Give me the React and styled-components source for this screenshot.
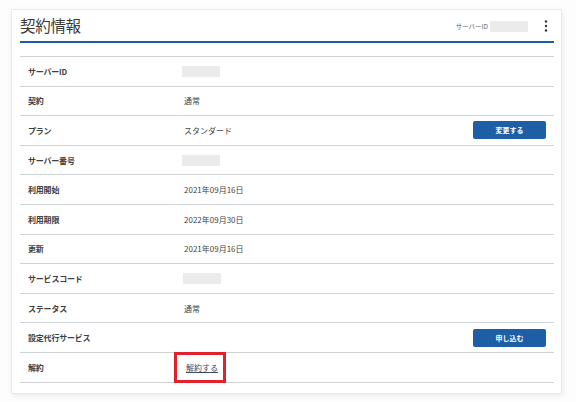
import React from "react";
import styled, { createGlobalStyle } from "styled-components";

const Global = createGlobalStyle`
  html, body { margin: 0; padding: 0; background: #ffffff; }
  body { font-family: "Noto Sans CJK JP", "Noto Sans", sans-serif; color: #333; }
  * { box-sizing: border-box; }
`;

const Page = styled.div`
  width: 576px;
  height: 402px;
  padding: 9px 14px 8px 11px;
  background: #fdfdfd;
`;

const Card = styled.section`
  width: 551px;
  height: 385px;
  background: #fff;
  border: 1px solid #e9e9e9;
  box-shadow: 1px 2px 6px rgba(0, 0, 0, 0.07);
  padding: 0 7px 0 8px;
  display: flex;
  flex-direction: column;
`;

const Header = styled.header`
  height: 33px;
  display: flex;
  align-items: center;
  justify-content: space-between;
  border-bottom: 2px solid #1f5c9f;
  padding-top: 1px;
`;

const Title = styled.h1`
  margin: 0;
  font-size: 15.5px;
  font-weight: 400;
  color: #3a3a3a;
  letter-spacing: -0.3px;
  line-height: 1;
`;

const HeaderMeta = styled.div`
  display: flex;
  align-items: center;
  gap: 2px;
  font-size: 6.5px;
  color: #666;
  padding-right: 6px;
`;

const Placeholder = styled.span`
  display: inline-block;
  width: ${(p) => p.$w || 38}px;
  height: ${(p) => p.$h || 11}px;
  background: #ebebeb;
`;

const Kebab = styled.svg`
  margin-left: 14px;
  display: block;
`;

const Table = styled.div`
  margin-top: 13px;
  border-top: 1px solid #cfd2d6;
  display: flex;
  flex-direction: column;
`;

const Row = styled.div`
  height: 29.6px;
  display: grid;
  grid-template-columns: 154px 1fr auto;
  align-items: center;
  border-bottom: 1px solid #cfd2d6;
  padding: 0 8px 0 8px;
`;

const Label = styled.div`
  font-size: 8px;
  font-weight: 700;
  color: #404040;
  letter-spacing: -0.2px;
`;

const Value = styled.div`
  font-size: 8px;
  color: #444;
  position: relative;
  height: 100%;
  display: flex;
  align-items: center;
  padding-left: ${(p) => (p.$pad ? 2 : 0)}px;
`;

const Button = styled.button`
  width: 73px;
  height: 18px;
  border: none;
  border-radius: 2px;
  background: #1d5ea6;
  color: #fff;
  font-family: inherit;
  font-size: 7px;
  font-weight: 700;
  cursor: pointer;
  padding: 0;
`;

const Link = styled.a`
  color: #3a4a66;
  text-decoration: underline;
  font-size: 8px;
  padding-left: 2px;
`;

const Highlight = styled.span`
  position: absolute;
  left: -8px;
  top: -1px;
  width: 52px;
  height: 31px;
  border: 3px solid #e0222c;
  pointer-events: none;
`;

const rows = [
  { label: "サーバーID", ph: true },
  { label: "契約", value: "通常" },
  { label: "プラン", value: "スタンダード", button: "変更する" },
  { label: "サーバー番号", ph: true },
  { label: "利用開始", value: "2021年09月16日" },
  { label: "利用期限", value: "2022年09月30日" },
  { label: "更新", value: "2021年09月16日" },
  { label: "サービスコード", ph: true, phOffset: 1 },
  { label: "ステータス", value: "通常" },
  { label: "設定代行サービス", button: "申し込む" },
  { label: "解約", link: "解約する" },
];

export default function App() {
  return (
    <>
      <Global />
      <Page>
        <Card>
          <Header>
            <Title>契約情報</Title>
            <HeaderMeta>
              <span>サーバーID</span>
              <Placeholder $w={38} $h={11} />
              <Kebab width="4" height="12" viewBox="0 0 4 12">
                <circle cx="2" cy="1.5" r="1.2" fill="#333" />
                <circle cx="2" cy="6" r="1.2" fill="#333" />
                <circle cx="2" cy="10.5" r="1.2" fill="#333" />
              </Kebab>
            </HeaderMeta>
          </Header>
          <Table>
            {rows.map((r) => (
              <Row key={r.label}>
                <Label>{r.label}</Label>
                <Value $pad={!r.ph}>
                  {r.ph && <Placeholder $w={38} $h={11} style={r.phOffset ? { marginLeft: r.phOffset } : undefined} />}
                  {r.value}
                  {r.link && (
                    <>
                      <Link href="#">{r.link}</Link>
                      <Highlight />
                    </>
                  )}
                </Value>
                {r.button ? <Button>{r.button}</Button> : <span />}
              </Row>
            ))}
          </Table>
        </Card>
      </Page>
    </>
  );
}
